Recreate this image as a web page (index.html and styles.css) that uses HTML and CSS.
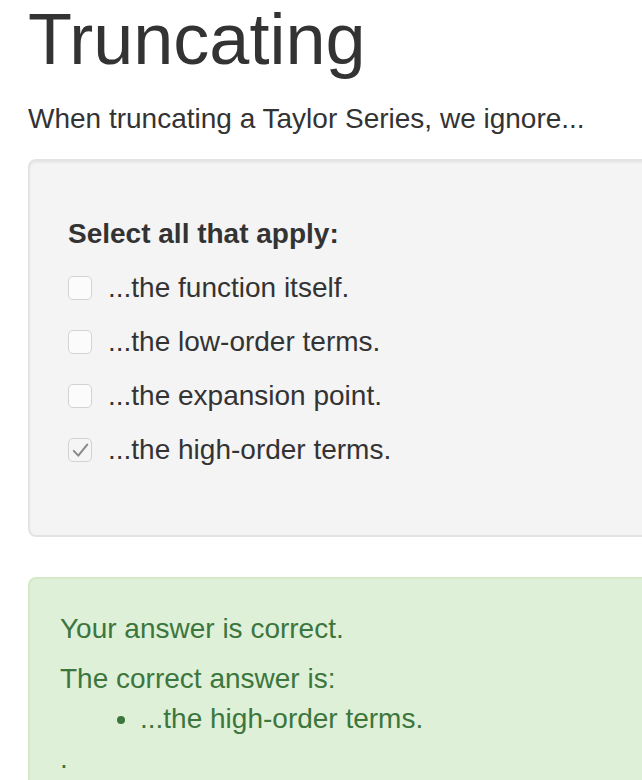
FILE: index.html
```html
<!DOCTYPE html>
<html lang="en">
<head>
<meta charset="utf-8">
<title>Truncating</title>
<link rel="stylesheet" href="styles.css">
</head>
<body>
<div class="page">
  <h1 class="title">Truncating</h1>
  <p class="lead">When truncating a Taylor Series, we ignore...</p>
  <div class="well">
    <div class="stack">
      <div class="label">Select all that apply:</div>
      <div class="option"><span class="box"></span><span>...the function itself.</span></div>
      <div class="option"><span class="box"></span><span>...the low-order terms.</span></div>
      <div class="option"><span class="box"></span><span>...the expansion point.</span></div>
      <div class="option"><span class="box checked"><svg class="check" viewBox="0 0 24 24" width="19" height="19"><path d="M3.5 12.5 L9.2 18.5 L20.5 4.5" fill="none" stroke="#8a8a8a" stroke-width="2.6" stroke-linecap="round" stroke-linejoin="round"/></svg></span><span>...the high-order terms.</span></div>
    </div>
  </div>
  <div class="alert">
    <p class="msg">Your answer is correct.</p>
    <p class="msg gap">The correct answer is:</p>
    <ul class="answers">
      <li>...the high-order terms.</li>
    </ul>
    <p class="msg">.</p>
  </div>
</div>
</body>
</html>
```
FILE: styles.css
```css
html, body {
  margin: 0;
  padding: 0;
  overflow: hidden;
  background: #fff;
}
body {
  font-family: "Liberation Sans", Arial, Helvetica, sans-serif;
  font-size: 28px;
  line-height: 40px;
  color: #333;
}
.page {
  width: 900px;
  padding-left: 28px;
}
.title {
  margin: 0 0 20px 0;
  font-size: 72px;
  line-height: 79px;
  font-weight: 500;
  color: #333;
}
.lead {
  margin: 0 0 20px 0;
}
.well {
  background: #f4f4f4;
  border: 2px solid #e3e3e3;
  border-radius: 8px;
  box-shadow: inset 0 2px 2px rgba(0,0,0,0.05);
  padding: 38px;
  margin-bottom: 40px;
}
.stack {
  display: flex;
  flex-direction: column;
  gap: 14px;
  padding: 15px 0 27px 0;
}
.label {
  font-weight: bold;
}
.option {
  display: flex;
  align-items: center;
  gap: 16px;
}
.box {
  width: 22px;
  height: 22px;
  border: 1px solid #d2d2d2;
  border-radius: 5px;
  background: #fbfbfb;
  display: flex;
  align-items: center;
  justify-content: center;
  flex: none;
}
.box.checked {
  background: #f5f5f5;
}
.check {
  flex: none;
}
.alert {
  background: #dff0d8;
  border: 2px solid #d6e9c6;
  border-radius: 8px;
  padding: 30px;
  color: #3c763d;
}
.msg {
  margin: 0;
}
.msg.gap {
  margin-top: 10px;
}
.answers {
  margin: 0;
  padding-left: 80px;
}
```
